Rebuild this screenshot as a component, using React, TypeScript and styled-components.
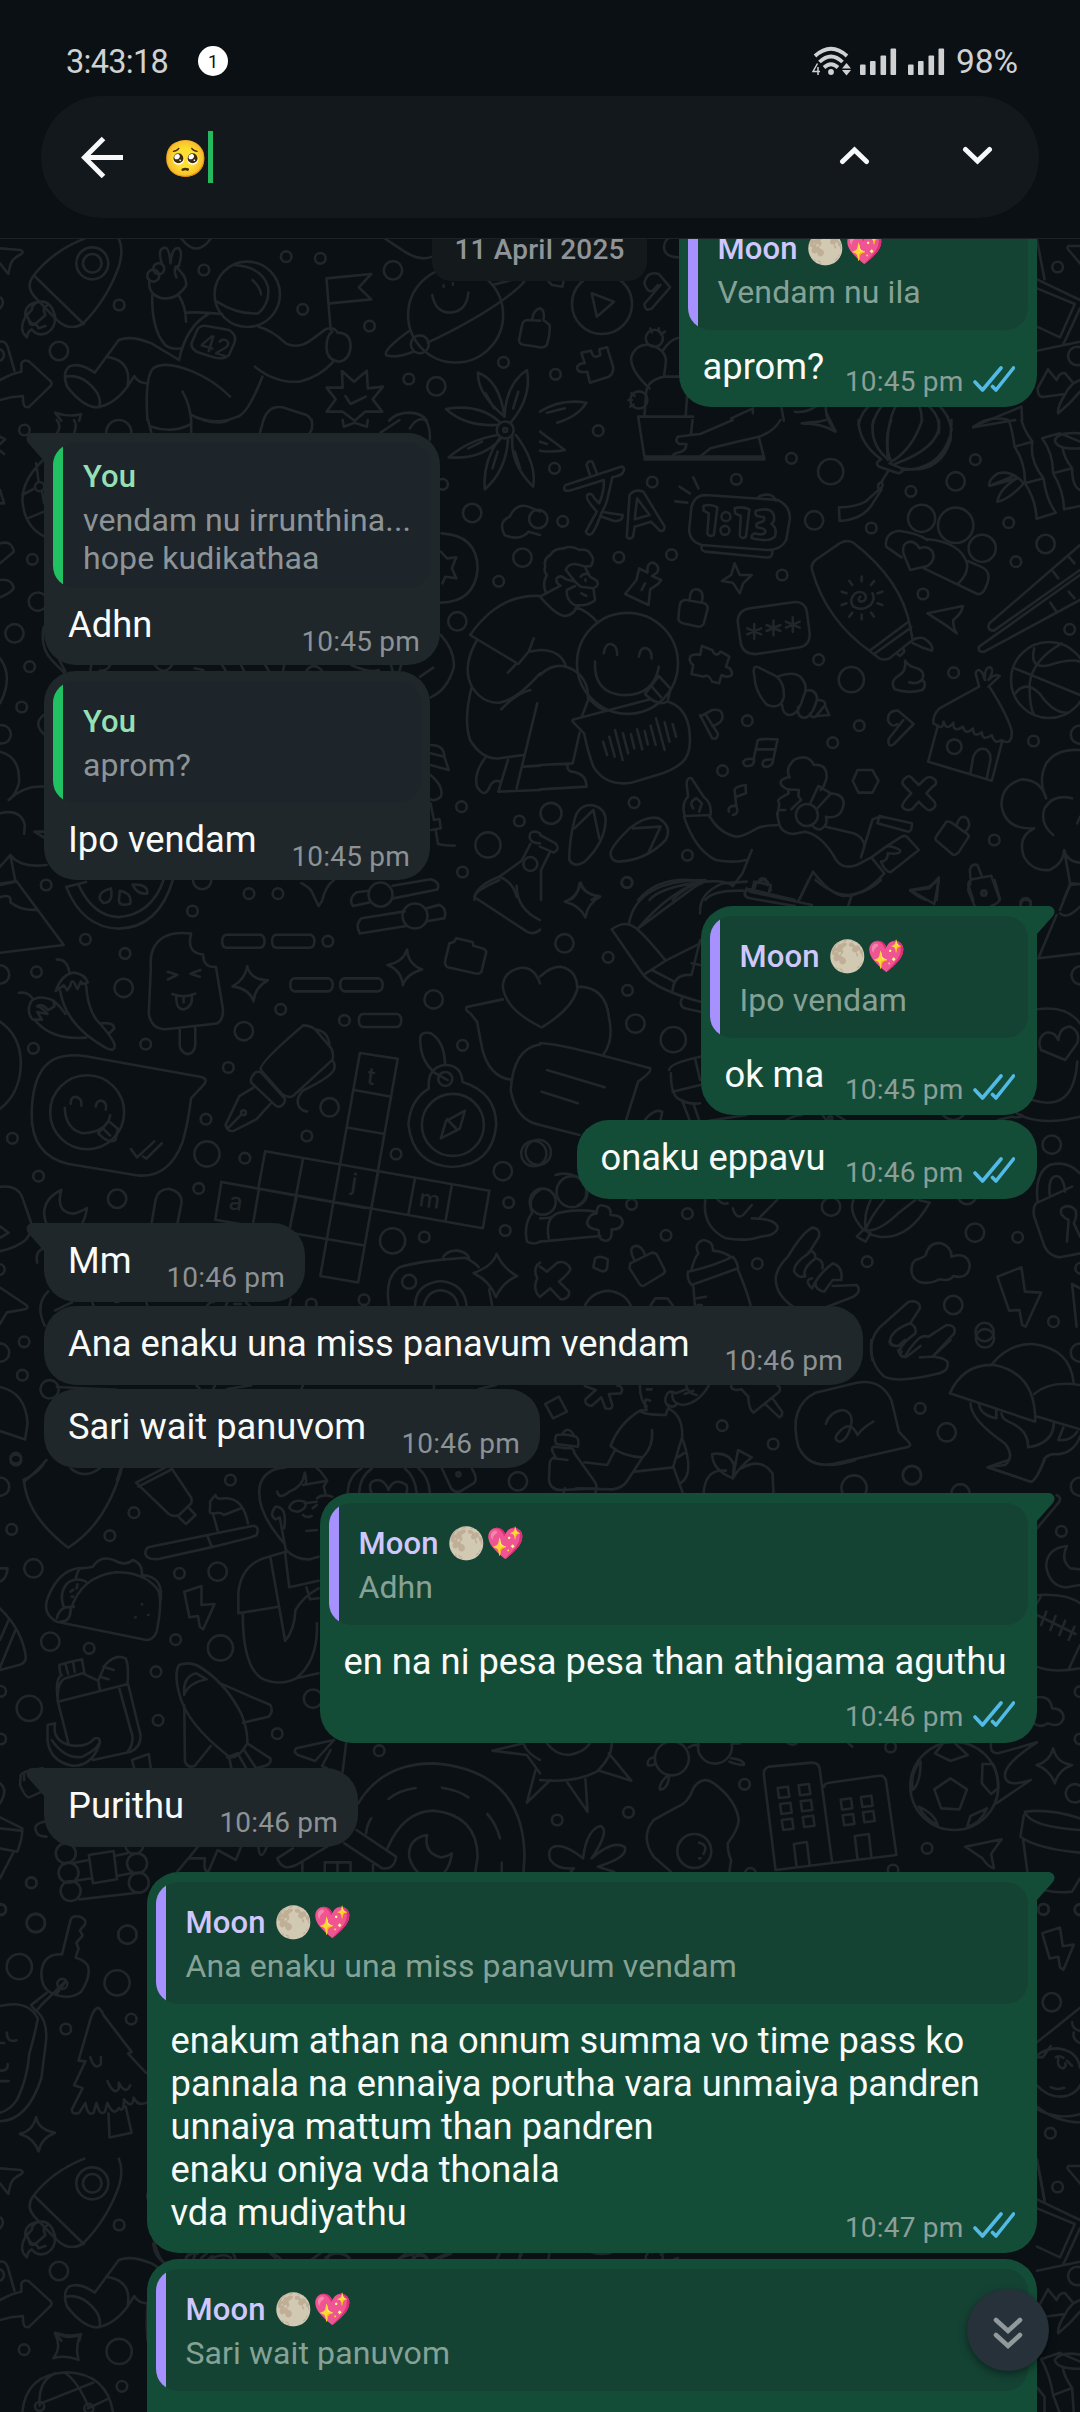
import React from "react";
import styled, { createGlobalStyle } from "styled-components";

const GlobalStyle = createGlobalStyle`
  * { box-sizing: border-box; }
  html, body { margin: 0; padding: 0; background: #0a1014; }
  body { font-family: Roboto, "Noto Sans", sans-serif; overflow: hidden; }
`;

/* ---------- wallpaper ---------- */

type Dot = [number, number, number];
interface Patch {
  x: number;
  y: number;
  sy: number;
  paths: string[];
  dots: Dot[];
  rounds?: Dot[];
}

const SX = 540 / 1568;
const S = 5.3;
const M = 9.2;
const L = 12.6;

const topLeft: Patch = {
  x: 0, y: 0, sy: 1 / 3,
  paths: [
    "M0 745L60 750Q70 754 62 762Q35 775 30 795L24 822L0 790",
    "M245 716Q150 755 95 830Q75 860 100 890L165 960Q200 995 240 972Q310 900 345 800Q360 750 345 716M100 828L243 972",
    "M100 908Q70 918 74 950Q58 980 68 1000L78 1012Q80 995 92 988Q110 1010 135 1000Q162 985 160 950Q150 905 120 905Q95 905 92 930L78 945Q90 985 110 965L132 945Q120 920 140 915M85 965Q88 980 105 972L112 985L132 978",
    "M0 925Q15 910 3 893M0 1025Q15 1022 22 1040L42 1112",
    "M0 1140Q35 1120 62 1115L62 1090Q70 1076 85 1085L148 1145Q152 1152 145 1160L85 1220Q70 1225 68 1210L66 1188Q30 1190 0 1200",
    "M470 790Q455 745 480 743Q492 745 495 790Q500 738 520 745Q532 760 518 800M510 800Q545 830 540 858Q510 905 465 893Q428 880 434 840M512 832Q500 800 520 797",
    "M442 885Q440 990 480 1035Q495 1050 528 1045M520 888Q540 920 540 965M540 938Q580 935 645 942M520 1080Q540 980 605 942",
    "M680 795Q760 800 778 860Q785 910 750 940Q690 945 630 905M733 840Q755 860 758 883",
    "M750 980Q790 990 830 1030Q870 1050 910 1015L945 988Q970 978 980 998Q1018 998 1018 1040Q1015 1080 985 1085Q950 1080 948 1045Q948 1005 965 995",
    "M960 990L948 835L1078 822L1042 862L1078 898L958 910",
    "M600 978L665 990Q690 1005 680 1030L665 1065Q650 1080 620 1072L570 1055Q550 1040 558 1025L575 985Q585 975 600 978",
    "M520 1080L440 1030Q380 1005 345 1020L275 1118Q230 1085 200 1100Q180 1120 195 1160Q240 1220 280 1222Q330 1215 370 1160Q385 1080 308 1070M190 1130Q240 1120 280 1175Q295 1200 288 1222M370 1160L390 1128Q400 1150 430 1150",
    "M428 1260Q420 1130 445 1105Q480 1080 560 1115Q620 1140 668 1190M530 1175Q550 1210 555 1260M740 1100Q800 1150 870 1145Q930 1130 968 1085M762 1130Q720 1240 690 1250Q620 1280 555 1245",
    "M1028 1145L1065 1112L1068 1165L1112 1160L1082 1198L1110 1235L1060 1235L1030 1262L995 1235L948 1235L975 1198L948 1163L995 1163L993 1113ZM1003 1188L1018 1212L1062 1190",
    "M1192 990Q1110 1050 1122 1066Q1150 1075 1200 1055M1242 1028Q1380 960 1460 900Q1520 855 1525 838M1430 855L1520 830M1255 885Q1265 938 1307 938Q1355 935 1360 878M1288 856v4M1315 850v4",
    "M527 716Q570 775 612 716M1118 716L1175 755Q1220 785 1255 770",
    "M1545 960Q1548 930 1568 925M1568 962L1530 960Q1518 962 1516 975L1507 1020Q1508 1035 1525 1035L1568 1042",
    "M1465 1250Q1385 1180 1388 1118Q1450 1140 1465 1250Q1470 1150 1530 1110Q1545 1190 1485 1265M1445 1275Q1350 1280 1295 1227Q1390 1210 1450 1265M1410 1180L1435 1225M1505 1175L1490 1225",
    "M765 1260Q780 1215 820 1222L890 1245Q900 1250 905 1262M178 1262L160 1238Q200 1252 235 1243L230 1262M1130 1262Q1150 1238 1190 1238Q1225 1240 1240 1262",
  ],
  dots: [[592,810,S],[831,770,S],[930,775,S],[879,928,S],[1073,978,S],[1187,1137,S],[1462,1087,S],[346,915,S],[171,1053,M],[1141,811,M],[1267,1159,M]],
  rounds: [[268,790,16],[268,790,9.3],[445,827,6],[461,806,5.5],[718,883,32.7],[1323,945,47.5],[1219,1033,9],[-6,1065,6]],
};

const topRight: Patch = {
  x: 540, y: 0, sy: 1 / 3,
  paths: [
    "M400 772Q360 770 360 740Q362 722 372 716M150 880L215 905L165 950Z",
    "M303 850Q310 812 345 822L378 862L325 925Q305 937 303 912L350 855M303 850Q312 880 328 872L342 855",
    "M0 925Q15 930 10 960L28 975Q30 1000 20 1035Q10 1045 0 1042M25 845L35 855L65 860L68 845",
    "M145 1148L137 1115Q105 1120 108 1100Q115 1088 130 1090L120 1058L148 1052Q155 1080 175 1065L172 1048L195 1042L212 1100Q215 1120 200 1130Z",
    "M318 1165Q260 1110 265 1070Q280 1030 320 1035Q370 1050 365 1090L360 1130Q310 1140 308 1180L303 1250M360 1130L415 1130M355 1055Q375 1020 400 1014M285 1250L445 1250M423 1250L427 1190M320 985l5 12M345 985v10M363 995l-12 8M265 1180l10 8M257 1200h10M262 1220l10 -6",
    "M0 1235Q60 1195 135 1208Q110 1250 50 1268M20 1238L72 1225M285 1250L303 1370L650 1370",
    "M1443 720L1465 838M1443 838L1568 900M1443 865L1553 912L1510 1012L1443 980M1568 925L1520 1032M1443 1052L1568 1025M1568 738L1535 738Q1528 742 1535 750L1568 790",
    "M1475 1108L1500 1140Q1510 1115 1525 1120L1545 1145M1475 1108L1445 1165Q1445 1195 1465 1190L1525 1182Q1500 1225 1505 1240Q1540 1210 1568 1175M1525 1182Q1540 1150 1568 1140",
    "M555 1255L618 1225L618 1240M700 1215L708 1262M800 1220Q770 1240 740 1235M830 1220Q828 1260 858 1292",
    "M925 1275Q940 1190 1060 1180Q1180 1190 1195 1290M965 1280Q980 1200 1060 1180Q1000 1240 1010 1380M1060 1180Q1110 1200 1108 1262M1060 1180Q1170 1220 1158 1300M1258 1280L1398 1220L1400 1260",
  ],
  dots: [[45,1123,S],[1503,801,S],[1560,1068,M]],
  rounds: [[180,912,30],[332,1015,8.6],[287,1200,8.6]],
};

const patches: Patch[] = [
  {
    x: 0, y: 420, sy: 1 / 3,
    paths: [
      "M0 50L15 58L0 72M0 92L12 102M165 0Q180 20 165 40M430 0L440 40M440 20Q500 42 555 12M555 0V40M765 0L755 38M590 0Q640 15 665 0M905 0Q910 25 900 38M995 0L998 20L1030 8L1065 20L1068 0M1105 38L1160 0M1190 25Q1210 -10 1235 0Q1250 20 1248 60M215 40Q225 15 215 0",
      "M1445 45Q1360 60 1303 112Q1400 120 1455 55M1450 55Q1400 130 1408 208Q1470 150 1475 58M1488 50Q1480 130 1548 200Q1560 130 1498 45M1360 85L1400 65M1430 145L1445 95M1510 145L1495 95",
      "M125 120Q65 180 65 240Q70 320 130 350M105 130L112 185M122 215L128 250M65 225L100 205M80 295L128 275M0 250L12 250L0 210M0 370Q35 360 40 395L0 430M0 480Q35 475 40 505Q30 520 0 532",
      "M1282 340Q1385 345 1387 445Q1380 545 1280 548M1285 490L1293 470L1325 475L1312 445L1325 412L1298 415L1280 395",
      "M1568 345L1535 335Q1510 365 1465 345Q1445 305 1480 290Q1500 245 1540 262L1568 275",
      "M1568 528Q1450 520 1365 645L1505 732L1535 695L1568 690M1385 660Q1340 740 1370 800Q1400 850 1450 848Q1500 840 1568 760M1475 758L1500 730M1370 800Q1345 900 1365 960Q1400 1020 1450 1015L1520 1005M1455 868Q1500 820 1540 810M1408 1015Q1375 1060 1385 1100Q1405 1135 1420 1105Q1430 1075 1455 1085M1475 1020L1447 1115L1568 1110M1560 850L1500 1105M1520 1040L1568 1037M1535 695L1550 655",
      "M1280 645Q1320 690 1318 740Q1300 810 1250 832M1220 770L1258 743M127 620Q115 680 150 720L188 760M172 720L190 755M265 735L262 752M320 735Q310 755 290 752M450 735Q475 770 500 735M565 745L590 750M645 735L655 752M700 735L708 752M770 735L780 752M825 735L822 752M890 752Q910 725 935 752M1020 735Q1070 760 1100 750M1135 735L1140 752M1165 735L1160 752",
      "M1250 975Q1290 975 1290 1010L1250 1000M1290 1010L1303 1050L1250 1035M1250 1065Q1290 1100 1280 1130Q1265 1145 1250 1138M1250 1150L1260 1200L1276 1197L1280 1225L1252 1230M1265 1230L1272 1272Q1290 1277 1320 1277M1540 1240Q1530 1268 1568 1270M1568 1240Q1550 1230 1540 1240M1540 1272L1515 1322L1450 1370Q1375 1400 1378 1440M1450 1370Q1490 1385 1500 1430",
      "M0 715Q40 770 0 850M0 995Q60 1010 55 1090Q45 1125 25 1140Q70 1095 130 1100M127 885Q95 910 127 942M0 1180Q60 1165 72 1215L70 1242M127 1235L100 1235L127 1252M0 1340L30 1305Q60 1345 135 1335M30 1305L45 1385L0 1395",
    ],
    dots: [[71,30,S],[1285,193,S],[94,418,S],[1448,484,S],[86,740,S],[63,861,S],[1340,1160,S],[1508,1203,S],[1343,1356,S],[134,1395,S],[723,1421,S],[807,1421,S],[1371,279,M],[1517,413,M],[1328,604,M],[110,545,M],[42,640,M],[5,943,M],[1417,1275,L]],
    rounds: [[1467,30,8.5],[1467,30,2],[345,38,12.6],[115,200,4.6],[1540,1332,7]],
  },
  {
    x: 540, y: 420, sy: 1 / 3,
    paths: [
      "M0 35L72 90Q40 98 0 92M0 65L20 72",
      "M443 0L438 45L400 50Q390 65 405 72L425 72Q425 90 410 95Q380 100 385 115M438 45L465 42L560 0M455 118L495 85L560 68L635 50Q680 35 698 0M635 50L652 118L303 118",
      "M760 10L810 5Q825 0 830 0M760 10Q820 10 858 35L832 -20",
      "M925 0Q925 60 975 105L990 118Q970 130 985 140L1040 160Q1060 155 1050 145L1015 130M1050 145Q1160 165 1192 60L1195 0M968 0Q955 70 1010 118M1020 0Q995 70 1020 125M1110 0Q1080 90 1020 125M1158 0Q1170 80 1030 132M1190 50Q1160 150 1050 150M1010 155L992 185Q1000 200 985 208Q975 195 992 185M985 208L945 245Q915 262 868 262L870 303Q930 300 960 260L992 208",
      "M1258 22L1380 0M1258 22Q1300 -15 1360 0Q1370 20 1378 80L1430 65Q1405 30 1398 0M1378 80Q1410 130 1408 190L1462 175Q1420 120 1430 65M1408 190Q1440 240 1442 296L1498 278Q1470 240 1462 175M1405 190Q1370 150 1330 160Q1300 180 1305 198L1385 175Q1335 205 1328 245Q1360 240 1405 190M1305 198L1370 170",
      "M1568 85Q1500 90 1495 60Q1505 35 1568 40M1458 55L1510 40L1568 65M1458 55Q1490 100 1490 160L1545 145Q1520 110 1518 85M1490 160Q1520 210 1522 268L1568 258M1545 145Q1545 200 1568 210",
      "M75 195L235 140Q248 140 242 155Q238 165 225 168L210 172L195 240Q190 260 180 275Q165 320 152 340Q140 350 133 335L165 275Q130 235 137 225Q150 215 158 235L172 250Q188 210 185 180L85 212Q65 215 72 198M145 165L135 135Q140 120 152 125L165 160M180 275L205 280L240 285Q240 305 215 303L180 290",
      "M252 350L260 225Q275 205 300 215L362 320Q362 335 348 332L322 305L275 320L270 350Q260 362 252 350M282 235L318 285L275 298Z",
      "M480 225L690 240Q730 260 725 300L715 360Q700 390 660 390L470 375Q435 365 433 330L440 260Q450 225 480 225M632 235Q640 220 670 225Q685 235 685 243M470 375Q465 392 480 395L655 412Q675 415 675 395M445 172L460 205M405 200L435 220M393 244L428 248",
      "M475 258Q495 250 515 262L505 345Q490 352 486 340L490 280L475 272ZM565 265Q585 258 608 268L598 350Q585 360 580 345L583 288L567 280ZM628 272Q680 258 680 295Q680 308 672 312Q690 325 682 350Q665 368 615 355Q612 345 622 340Q650 348 655 335Q655 325 630 322Q625 312 635 308Q655 305 650 292L630 288Q622 280 628 272",
      "M0 530L60 497Q45 490 48 475Q60 462 75 478L102 485L75 450Q85 420 130 440L148 438Q160 415 148 405Q140 385 115 390Q90 375 70 385Q40 385 30 405Q10 415 15 440Q10 455 20 465Q5 490 18 520M130 440L145 470L165 482Q175 495 155 505L118 500L102 485M155 505L160 540Q140 560 100 555Q75 540 78 510L102 498M120 520L135 528M0 530Q50 590 75 588Q100 582 105 562M105 562Q140 575 165 605M118 470Q125 460 138 462M132 478v4",
      "M247 522L280 480L288 445L312 458Q310 425 330 428Q350 440 340 458L325 468L352 480L345 490L320 508L315 555ZM305 490L295 510",
      "M412 545Q405 540 402 595Q400 605 415 610L460 620Q475 620 477 605L487 565Q487 550 470 548L425 540Q415 538 412 545M435 540Q435 505 455 508Q478 512 470 545",
      "M565 430L580 465L615 465L590 490L580 520L560 488L528 483L555 465Z",
      "M185 700Q190 670 205 672Q225 675 224 705M287 710Q290 682 308 684Q325 690 324 715M160 725Q155 815 235 825Q330 830 345 740M305 822L345 768L378 805M305 822Q340 860 370 845L380 805M325 800L352 832",
      "M0 690Q60 690 75 738M0 765Q30 735 65 738Q125 750 138 810L140 840L122 888M140 832Q160 860 188 872M115 938L95 1030L0 1035M82 1032Q75 1050 92 1055Q135 1060 135 1100L0 1108",
      "M100 898L320 838M372 845Q420 860 432 920Q445 1000 410 1030Q380 1055 340 1065L265 1088Q190 1100 155 1040Q140 1000 128 940L95 905Q92 898 100 898M183 965l12 40M201 950l16 60M218 930l22 90M241 940l15 60M264 943l10 42M282 928l15 60M304 933l9 40M321 917l15 58M337 895l25 95M362 907l14 58M385 912l10 38",
      "M470 678L500 690Q510 715 525 695L550 710L540 740Q560 745 557 765Q545 775 527 765L520 790L500 785Q490 760 475 770L440 762L445 735Q430 725 437 708Q450 700 465 705Z",
      "M610 565L740 546Q770 545 775 575L783 640Q785 675 755 682L630 702Q590 705 583 670L574 605Q575 570 610 565M622 612v44M602 625l40 18M642 625l-40 18M678 602v44M658 615l40 18M698 615l-40 18M734 592v44M714 605l40 18M754 605l-40 18",
      "M640 745Q615 730 622 765Q625 820 660 855Q700 870 708 830Q710 790 688 770ZM690 770Q740 750 760 775Q780 800 765 830Q750 885 725 885Q705 885 703 855M770 812Q800 805 805 835Q790 895 765 893Q745 890 750 860M805 840Q830 840 828 855L800 890Q785 895 785 880M828 858L840 885L805 888",
      "M800 420L870 370Q890 358 910 368Q1050 480 1075 620L1082 660L1015 715Q1000 722 985 715L960 695Q830 600 790 450Q785 435 800 420M960 690L1070 605M970 702L1078 622M1035 700L1045 708L1058 695L1055 685M1082 660Q1100 650 1115 655Q1145 675 1138 692Q1110 685 1080 668",
      "M930 530Q920 540 930 545Q950 545 945 525Q935 510 915 520Q895 540 910 560Q935 575 960 555Q975 535 965 520M934 470v14M970 483l-9 12M994 515l-14 5M994 555l-14-5M970 590l-9-12M934 598v-14M898 590l9-12M876 555l14-5M876 515l14 5M898 483l9 12",
      "M1005 380Q1000 340 1040 332Q1100 340 1125 360M1005 380L1050 412M1120 357Q1220 365 1240 430Q1245 460 1215 490M1115 445L1270 522Q1285 525 1295 500Q1315 455 1280 440L1242 423M1075 450L1055 400Q1050 365 1080 365Q1095 370 1102 385Q1125 375 1140 395Q1150 420 1125 438Z",
      "M1568 375L1305 610Q1295 630 1318 632L1568 450M1568 465L1275 680Q1270 698 1290 695L1568 540M1490 455L1505 475M1535 410L1552 430M1482 548L1498 572M1535 515L1552 535",
      "M1125 580L1228 558Q1225 580 1200 600Q1198 620 1210 640L1185 620Z",
      "M1378 745L1568 825M1435 685Q1420 750 1480 735Q1540 715 1568 725M1515 670Q1430 720 1422 790Q1420 860 1435 885M1380 820Q1410 780 1450 820Q1490 880 1530 878",
      "M1060 722Q1070 740 1095 745Q1120 755 1110 778Q1125 795 1110 810Q1070 822 1030 808Q1015 785 1040 768Q1065 755 1060 722M1110 778Q1095 795 1072 787",
      "M1275 800L1160 865Q1140 885 1142 910L1160 920Q1170 925 1172 905Q1180 935 1200 908Q1200 940 1228 920Q1235 948 1257 925Q1258 955 1283 937Q1285 965 1312 945Q1320 975 1340 960Q1370 980 1370 935Q1360 890 1305 800M1275 800L1265 760Q1272 740 1285 760L1292 780Q1290 740 1308 742Q1320 750 1302 780Q1320 760 1335 768L1302 800M1155 918L1127 1025L1312 1082L1342 965M1250 1060L1258 1010Q1270 980 1295 988Q1310 1000 1308 1020L1298 1072",
      "M465 885L500 955Q515 960 517 942L480 882M465 890L500 870Q530 865 530 890Q530 905 510 915L500 917",
      "M1010 900Q1010 870 1040 872L1085 912L1028 972Q1010 985 1012 958L1055 900M1010 900Q1020 925 1038 912",
      "M605 1038Q590 1040 590 1025Q600 1012 620 1018L632 962Q632 955 690 958L675 1030Q665 1045 648 1038Q640 1018 670 1018M605 1038Q622 1038 622 1018M630 988L682 988",
      "M548 1175Q545 1155 570 1158L565 1110Q565 1100 597 1095L598 1120L570 1130M570 1158Q580 1180 560 1185",
      "M922 1050L965 1050L983 1083L965 1118L925 1118L908 1083Z",
      "M1060 1075Q1072 1060 1085 1080L1100 1095L1115 1080Q1130 1062 1148 1080Q1155 1092 1140 1100L1122 1120L1145 1145Q1155 1160 1135 1170Q1125 1175 1100 1145L1080 1168Q1060 1175 1052 1160Q1050 1150 1078 1120L1055 1095Q1048 1085 1060 1075",
      "M420 1188L495 1185Q500 1150 475 1130L440 1075Q425 1070 426 1095L430 1130Q410 1150 420 1188M445 1165Q430 1145 455 1135L470 1150L462 1175M418 1190Q450 1290 510 1320Q560 1330 600 1320M490 1185Q520 1240 570 1250Q590 1250 630 1225Q650 1215 695 1215M615 1290L588 1360L560 1398",
      "M695 1215Q705 1240 735 1242L770 1235M695 1215L690 1190Q685 1170 700 1170L712 1170M690 1185L695 1150Q685 1140 705 1130L722 1120L720 1108L752 1110L750 1128L758 1140L742 1155L730 1168M722 1110Q690 1095 702 1080Q715 1070 725 1072Q710 1045 740 1018Q780 1000 795 1035Q835 1030 832 1075Q825 1100 815 1110M785 1150L808 1098L845 1120L805 1165M840 1120Q880 1120 882 1150Q875 1200 830 1190Q838 1215 815 1228Q800 1230 790 1215",
      "M770 1235Q820 1245 860 1320Q880 1350 920 1335L962 1312M830 1220L910 1240Q940 1250 942 1280L932 1312L965 1200Q975 1190 1000 1192M985 1188L1080 1210Q1080 1235 1070 1235L980 1210ZM1000 1360L962 1312L1005 1280L1050 1250Q1060 1245 1065 1250L1100 1290L1020 1355Q1005 1360 990 1325M1005 1280Q1020 1275 1045 1290Q1050 1305 1010 1300Q1010 1325 990 1325M752 1440L793 1355Q840 1420 880 1428Q940 1430 1000 1360",
      "M1180 1205L1150 1250Q1145 1260 1155 1265L1200 1305Q1208 1305 1215 1298L1245 1250Q1245 1242 1235 1238L1195 1208Q1185 1203 1180 1205M1210 1215Q1220 1180 1240 1195Q1255 1215 1235 1235",
      "M1568 990Q1500 985 1470 1030Q1445 1080 1470 1135Q1455 1080 1400 1078Q1340 1095 1340 1155Q1350 1230 1435 1225Q1385 1250 1405 1310Q1430 1355 1480 1350Q1520 1330 1522 1290Q1530 1325 1568 1328M1545 1135Q1490 1120 1465 1165Q1450 1210 1490 1245M1568 1190L1560 1210",
      "M85 1320Q85 1260 100 1200Q110 1155 150 1155Q195 1165 190 1210Q185 1270 130 1325Q100 1345 85 1320M100 1225L155 1170L172 1255M205 1305Q200 1285 260 1225Q310 1185 345 1195Q385 1220 365 1260Q310 1320 230 1325Q210 1325 205 1305M270 1225L350 1220L315 1298M350 1220",
      "M0 1245L45 1270Q60 1285 40 1298L0 1280M28 1298L3 1350V1440",
      "M285 1440Q350 1360 480 1385Q350 1400 318 1440M480 1385Q430 1390 385 1440M480 1385Q540 1380 560 1398M480 1440Q500 1410 590 1412M610 1408Q590 1410 598 1430M610 1408L740 1440M618 1405L622 1385L668 1395L670 1412M635 1385Q640 1370 655 1378Q662 1385 660 1395M85 1440Q110 1430 115 1390Q130 1425 172 1428L150 1440",
      "M1075 1412L1130 1405L1158 1372L1152 1440M1075 1412L1100 1430L1120 1440M1250 1375L1248 1350Q1252 1330 1270 1335L1282 1365M1245 1400Q1240 1385 1255 1378L1310 1367L1335 1440M1245 1400L1258 1440M1522 1290L1540 1395L1568 1392M1540 1395L1520 1440",
    ],
    dots: [[169,32,S],[42,145,S],[326,186,S],[570,178,S],[730,115,S],[66,304,S],[1264,119,S],[1077,214,S],[962,324,S],[1361,308,S],[1382,425,S],[229,412,S],[382,404,S],[703,465,S],[1112,522,S],[1538,628,S],[809,719,S],[1201,758,S],[602,902,S],[850,968,S],[927,917,S],[1433,963,S],[530,1052,S],[273,1148,S],[428,1306,S],[1319,1260,S],[253,1387,S],[-5,297,M],[1207,184,M],[1468,372,M],[796,301,M],[844,155,L],[904,779,L],[1568,944,M],[32,1180,10.5]],
    rounds: [[540,290,4.5],[537,331,4.5],[254,730,50.5],[1478,780,38],[1108,295,13.6],[1207,316,17.7],[1284,385,13.6],[775,1185,11],[1203,980,7.3],[1289,1419,2]],
  },
  {
    x: 0, y: 880, sy: 600 / 1568,
    paths: [
      "M0 45Q35 35 30 58Q60 80 105 78M0 10L48 3L185 170L0 190M192 18L250 5M192 18Q240 125 345 127Q460 125 502 0M228 12Q270 95 345 97Q440 90 475 0M290 50Q285 30 322 22Q330 60 300 60ZM348 28Q385 35 378 62Q350 70 345 55ZM385 12Q430 10 428 35Q400 40 385 12",
      "M875 8Q900 20 905 30L925 68L935 55Q945 15 970 0M1072 28L1035 32Q1010 50 1025 68L1075 58M1140 15L1250 -2Q1280 5 1270 25L1142 48M1175 82L1050 100Q1030 115 1045 140L1180 120M1235 75L1275 65Q1300 75 1290 100L1240 108M1378 45Q1375 30 1450 0M1378 45L1530 135Q1550 145 1568 130M1500 15Q1500 75 1568 105",
      "M555 140Q470 130 445 180Q435 200 438 230L432 350Q440 390 480 390L630 375Q650 365 647 335L627 227Q590 230 590 195Q540 190 555 140M522 388V435Q530 455 548 455Q565 450 567 430V385M487 240L515 248L487 260M582 235L553 245L580 253M500 298Q535 310 567 297M512 303Q510 340 535 338Q560 330 557 303M533 305V320",
      "M657 143H757Q769 148 768 160Q768 175 755 177H657Q645 175 645 160Q645 145 657 143M802 143H902Q914 148 913 160Q913 175 900 177H802Q790 175 790 160Q790 145 802 143M855 257H955Q967 262 966 274Q966 289 953 291H855Q843 289 843 274Q843 259 855 257M1000 257H1100Q1112 262 1111 274Q1111 289 1098 291H1000Q988 289 988 274Q988 259 1000 257M1054 350H1154Q1166 355 1165 367Q1165 382 1152 384H1054Q1042 382 1042 367Q1042 352 1054 350",
      "M718 225Q725 260 778 262Q740 280 736 317Q725 285 675 278Q712 260 718 225ZM1182 182Q1185 220 1226 234Q1180 245 1170 275Q1165 235 1125 222Q1170 215 1182 182Z",
      "M1305 165L1318 162L1325 152L1372 162L1375 172L1405 180Q1415 185 1410 195L1398 240Q1390 248 1375 243L1300 228Q1290 222 1293 210Z",
      "M165 208Q195 205 202 243M162 290Q180 245 215 242Q245 245 255 268L240 272L235 265L225 285L215 268Q205 260 205 275L195 288L185 275ZM175 290Q190 380 310 440Q335 450 333 430Q325 410 290 375Q255 345 250 275M290 375Q330 370 332 388L318 400M55 295Q80 290 97 312M95 365Q75 345 90 318Q110 298 155 315L158 330L140 340Q120 320 108 330Q125 335 138 350L108 345L122 365ZM100 365Q150 420 250 412M155 315Q175 330 190 350",
      "M245 460L585 515Q605 520 592 535L555 570Q545 640 530 685Q490 780 400 772L200 742Q90 720 92 610Q95 470 190 460Q215 456 245 460M205 585Q205 565 222 567Q240 572 236 590M278 592Q280 575 296 577Q312 582 307 600M188 595Q190 650 240 662Q310 660 320 615M285 662L315 630L342 650M285 662Q315 690 335 680L342 650M300 650L320 668M380 703L398 725L448 683M415 722L425 728L470 688",
      "M757 495Q750 480 880 380Q900 380 915 390L962 440Q970 455 965 470L850 565Q835 570 820 560L765 505ZM915 390Q955 395 957 435M965 470Q975 480 970 495Q960 515 880 550Q855 575 870 595Q880 605 892 605M735 510Q745 495 760 505L820 565Q835 575 820 588Q808 598 795 585L730 530Q725 520 735 510M735 543L695 565L655 640Q660 660 680 655L745 625L785 585M660 650L702 612",
      "M1045 452L1155 467L1040 1052L930 1035ZM1028 549L1133 566M1008 647L1113 663M770 709L1421 812L1402 910L750 806ZM643 789L1060 857M643 789L625 888L1058 955M880 728L842 908M752 806L735 898M1205 780L1186 872M1312 797L1294 889M862 824L842 908M1098 763L1078 860",
      "M1245 545Q1190 575 1186 640Q1200 745 1313 750Q1430 745 1441 640Q1440 555 1343 528Q1340 485 1293 483Q1240 490 1245 545M1292 480Q1290 420 1250 400Q1220 395 1220 415Q1220 470 1258 500M1255 500L1300 523M1350 603L1335 650L1280 675L1295 630ZM1298 625L1325 650",
      "M1568 270Q1550 225 1510 230Q1460 240 1460 280Q1470 340 1568 383M1460 312L1355 332Q1350 342 1365 348L1385 370L1400 440Q1420 515 1485 522M1568 430Q1490 440 1483 550Q1500 630 1568 640M0 370Q65 410 60 490Q55 560 0 598",
      "M178 810Q160 870 215 872Q240 865 252 857Q250 880 238 898M178 810Q130 830 128 870Q130 890 135 898M440 898L452 835Q460 808 490 807Q530 815 527 845L515 898M0 802Q50 795 65 830L90 895Q95 920 75 940Q50 960 0 970M0 905L25 922L0 935M108 1000Q100 970 130 962M0 1065L78 1112Q85 1120 65 1123L20 1130L0 1160M140 1075Q100 1110 130 1165M160 1125L210 1103M268 1103L272 1115M335 1103h8M425 1103l3 12M600 1115Q610 1100 620 1103M660 1103l-5 12M680 1108h20M715 1105l10 8M840 1115L845 1095",
      "M1130 1115Q1115 1040 1160 1012Q1200 1000 1285 992L1350 987Q1380 1000 1390 1012M1285 992Q1290 970 1325 968Q1355 972 1362 987M1375 1027Q1430 1010 1442 977Q1460 1015 1502 1035Q1460 1050 1440 1090Q1425 1050 1375 1027M1420 1070L1430 1115M1205 1115Q1205 1055 1280 1048Q1350 1055 1355 1115M1230 1115Q1240 1072 1282 1072Q1325 1078 1330 1115",
      "M0 1325Q75 1340 80 1420L73 1462L0 1440M130 1520Q120 1545 68 1568M350 1540L340 1568M165 1325L340 1332M570 1320L580 1330M625 1320L618 1332M660 1330L730 1320M880 1320l-5 10M1260 1320v10M1390 1330L1440 1320",
      "M1568 810Q1530 830 1545 870Q1520 900 1530 945Q1550 955 1568 945M1568 1000Q1545 1015 1560 1040Q1545 1070 1568 1090",
    ],
    dots: [[559,81,S],[248,155,S],[363,192,S],[106,240,S],[815,338,S],[952,160,S],[1000,367,S],[97,440,S],[423,429,S],[663,490,S],[1343,432,S],[598,625,S],[891,669,S],[36,675,S],[711,727,S],[1150,716,S],[112,774,S],[577,806,S],[1477,843,S],[1467,916,S],[1232,933,S],[904,1108,S],[1057,1097,S],[70,1207,S],[65,1294,S],[46,1511,S],[-2,1018,S],[587,0,M],[0,247,M],[359,282,M],[1259,312,M],[708,395,M],[957,594,M],[1460,761,M],[340,833,M],[0,1235,M],[144,1331,M],[1550,715,L],[601,716,L],[1140,943,L]],
    rounds: [[1105,38,12],[1205,94,12.5],[253,607,37],[707,608,2.4],[1293,520,7],[1315,640,31],[1188,1050,7]],
  },
  {
    x: 540, y: 880, sy: 1 / 3,
    paths: [
      "M118 8Q130 45 175 50Q138 70 132 112Q115 75 72 65Q110 50 118 8",
      "M208 148Q240 125 262 135Q285 140 365 242L300 285ZM258 132Q280 0 480 0Q380 30 285 145M285 145L430 35Q460 10 470 10M465 100Q460 40 530 10L600 5M300 285Q340 330 465 365M365 242L465 190M325 270L390 305M385 330Q390 280 440 285L465 180M465 255L440 250M415 350Q400 375 420 385L465 395",
      "M600 25L610 35L790 75M600 25Q585 50 610 55L740 78M622 25L630 5L670 15L665 35M640 5Q650 -8 662 8L660 15M752 60L780 0M800 0Q870 60 920 40Q960 30 990 0M905 45L895 78M1075 30L1130 20L1158 0L1145 72M1075 30L1145 72M1250 10Q1240 25 1245 35L1262 78M1320 0L1335 55Q1335 70 1310 78M1395 75Q1400 50 1425 65L1425 75M1510 90L1540 10L1568 12M1510 100Q1530 120 1568 80M1500 105L1447 235L1568 220",
      "M0 290Q30 260 60 260Q110 270 108 330Q90 390 5 442M110 320Q190 320 200 410Q215 480 185 522M0 490Q40 485 320 565Q325 575 285 605L250 720M20 570L188 622M5 635L110 670M0 735L115 765M375 570Q375 550 465 530M380 580Q380 640 400 655Q430 675 465 670M385 635L465 615M450 535L465 600M412 660L435 722M445 670L462 720M305 720Q330 685 355 695L350 720M490 722L600 705M715 720Q740 705 760 705M820 705L830 718M860 705L885 720M1170 705Q1200 735 1230 705M1330 720L1370 710Q1400 715 1400 705",
      "M1443 388Q1530 375 1568 430M1385 700Q1450 740 1568 710M1430 660Q1550 700 1560 545M1525 540L1455 510Q1440 475 1470 458Q1495 455 1505 480Q1510 440 1540 440Q1570 455 1560 490Z",
      "M45 885Q95 870 130 910Q145 960 110 975M0 1015Q30 1015 35 1010M0 1085L175 1068M25 1075Q15 1015 50 1000Q100 985 165 995M165 1000Q165 970 185 977Q208 980 205 1005Q240 1005 240 1028Q235 1050 208 1048Q210 1085 188 1082Q170 1080 170 1050Q135 1045 137 1025Q145 1000 165 1000",
      "M160 1135Q175 1125 197 1138L195 1165Q190 1178 175 1172L155 1162ZM262 1150L325 1118Q335 1118 340 1125L362 1170Q365 1180 352 1185L305 1215Q295 1222 288 1210L260 1165ZM275 1142Q255 1105 275 1098Q295 1095 305 1125",
      "M0 1160L20 1175L50 1148Q75 1140 88 1165Q90 1175 55 1205L85 1235Q85 1258 60 1258L30 1225L0 1250M130 1278Q150 1235 200 1232Q250 1240 265 1280M320 1278L335 1255H370L388 1280",
      "M480 960Q470 1040 540 1075Q600 1085 640 1070Q690 1065 690 1040Q680 1015 615 1015M640 1010L690 958M515 958Q530 975 545 970M560 985Q570 1020 590 1005L615 975",
      "M430 1175Q500 1160 560 1130Q575 1150 575 1165L440 1215Q425 1195 430 1175M440 1168Q450 1130 460 1120Q445 1090 475 1080Q505 1085 502 1112Q535 1115 555 1132M445 1218L450 1278M575 1170Q600 1230 612 1278M455 1255L482 1250M458 1275h12",
      "M735 1280Q680 1240 685 1190Q690 1160 720 1130Q760 1060 790 1043Q815 1045 810 1070L780 1120M780 1120Q735 1150 738 1175Q755 1200 770 1185M770 1190Q760 1165 800 1135Q825 1140 820 1165M790 1195Q765 1200 790 1225Q810 1180 850 1150Q880 1160 875 1200L850 1200L825 1235Q800 1230 800 1210M780 1115Q800 1110 800 1135M850 1218L920 1215Q935 1235 910 1250L830 1282",
      "M910 960Q895 1000 940 1050Q980 1060 1040 1000L1090 960M960 960Q940 1000 945 1050M1000 960Q960 1010 945 1050M1130 970Q1070 1080 985 1070L955 1062M940 1048L960 1060L945 1085L920 1070ZM1100 960L1132 968",
      "M1090 1140Q1120 1130 1120 1125Q1130 1085 1165 1090Q1195 1100 1195 1130Q1240 1115 1248 1155Q1245 1200 1200 1188Q1190 1205 1160 1198Q1130 1215 1100 1205Q1070 1190 1082 1150Z",
      "M1328 1190L1398 1162L1408 1235L1455 1238L1410 1340L1400 1335L1392 1290L1362 1292ZM1545 1212L1568 1225M1545 1212L1558 1340",
      "M1545 920L1440 970Q1430 985 1435 1010L1465 1100Q1480 1130 1510 1132L1568 1120M1445 965Q1435 880 1480 855Q1530 840 1568 880M1480 945Q1475 890 1500 888Q1520 890 1525 935M1530 1085L1535 1020Q1505 1005 1515 985Q1535 970 1555 990Q1560 1010 1550 1030L1568 1070",
      "M965 1440Q950 1370 1000 1330L1070 1265Q1105 1260 1103 1285L1075 1330M1075 1330Q1020 1350 1015 1385Q1030 1405 1045 1395M1050 1415Q1040 1430 1060 1430Q1075 1400 1100 1375Q1115 1365 1128 1370L1180 1335Q1210 1335 1203 1360L1140 1430M1075 1330Q1095 1340 1090 1360Q1050 1390 1045 1410",
    ],
    dots: [[252,8,S],[198,232,S],[254,331,S],[266,973,S],[428,1001,S],[366,1066,S],[631,1151,S],[950,1145,S],[1387,1072,S],[1491,1325,S],[1410,70,S],[71,190,M],[277,431,M],[1200,1275,M],[1263,1058,M],[845,980,M],[1486,794,M],[1291,1356,M],[1570,286,M],[-5,817,L],[387,479,L],[1240,945,M],[1570,1165,S]],
    rounds: [[1289,39,2.6],[8,965,13],[93,935,15.5],[843,715,2]],
  },
  {
    x: 540, y: 1340, sy: 1 / 3,
    paths: [
      "M15 192L55 170L78 215L38 235ZM130 138L162 150L132 178Q128 195 150 198L178 172L190 205Q210 212 210 195L200 162L235 160Q245 140 225 137",
      "M290 137Q290 180 310 200M310 148h14M320 182L308 178Q300 195 310 210L290 212Q300 225 365 225L372 205M375 200Q355 185 370 160Q380 150 395 160L425 148M372 195Q385 205 395 195M385 160Q380 190 415 195Q460 190 490 137M425 137Q430 160 455 165M445 152L420 162M290 212Q230 250 205 318Q240 350 298 352Q330 320 325 270M372 205Q415 225 413 290L387 380L415 460M218 330L195 375L128 367M298 352L255 420Q240 445 210 448L105 445M275 395L387 382M413 295Q450 400 410 428M400 352L425 335",
      "M40 355L80 360M45 350Q25 320 45 320L75 325Q100 320 100 340L145 405Q180 450 150 446L60 450Q30 450 26 420L28 370Q30 355 45 350M48 285Q70 280 105 290Q115 300 110 320L48 312Q40 300 48 285M65 282Q80 255 98 285M72 445L68 460M165 445L160 460",
      "M555 137Q555 155 585 148L605 170Q605 205 620 218L695 155Q700 140 690 137M652 190L695 232Q705 228 703 215L675 175",
      "M500 342Q550 335 563 375L560 415Q500 390 500 342M560 415L575 330L615 352Q580 380 560 415M540 392Q480 385 475 460M585 385Q640 350 675 400L678 458",
      "M800 158L920 128Q990 115 1020 180Q1030 220 1042 275L1072 308Q1080 318 1065 322L850 372Q780 385 750 320Q720 200 800 158M830 252Q840 215 880 210Q905 215 905 245Q895 300 870 305Q850 300 865 280Q900 235 922 285Q940 260 968 245",
      "M962 0Q955 70 1000 110Q1040 130 1150 102Q1190 95 1183 65Q1165 45 1103 52M1140 50L1192 0M1018 0Q1010 20 1040 18L1060 0M1040 30Q1045 55 1065 50L1105 18",
      "M1190 160Q1230 70 1320 75Q1440 100 1438 245ZM1310 75Q1360 10 1430 12Q1540 25 1550 130M1435 162Q1480 120 1568 135M1438 228L1568 268M1250 190Q1250 240 1350 310Q1380 350 1350 375L1300 382L1425 425Q1440 425 1465 355Q1480 340 1500 343Q1550 340 1568 290M1275 195Q1280 225 1325 235M1325 210V235M1340 220Q1340 235 1360 245Q1420 270 1417 322Q1490 310 1492 250M1520 262L1505 300Q1540 305 1560 275",
    ],
    dots: [[1104,205,S],[529,257,S],[677,312,S],[1181,277,M],[1080,406,M],[1221,460,M],[912,444,L],[1568,38,M],[1568,440,M],[1292,-5,M]],
  },
  {
    x: 0, y: 1460, sy: 1 / 3,
    paths: [
      "M70 65Q110 30 135 0M70 65Q80 170 198 263Q310 190 355 20M205 25Q245 60 290 25M395 68L485 20M395 68L490 162Q505 172 520 165L555 130Q560 115 550 105L498 25M402 80L495 30M520 172L540 192L568 165L550 145",
      "M610 145L610 125L625 105Q630 120 650 115Q705 110 720 190M610 145Q605 165 625 160Q640 155 650 165L700 145M618 160L632 212M430 262L735 197Q755 200 745 225Q735 235 460 297Q425 300 422 280Q422 268 430 262M603 230L615 260",
      "M825 250Q740 150 755 75Q770 25 830 22M805 95Q810 120 840 95Q880 80 885 38Q895 75 880 75L950 62Q930 30 920 25M950 62L940 80L945 100M825 205Q835 140 800 140Q780 165 800 178L812 172L830 270Q860 300 900 298L925 290M840 142Q850 115 885 125Q895 145 865 155Q845 155 840 142M885 130L920 125M920 115Q935 100 965 110M908 145L920 135M880 165Q890 175 905 168M890 213L920 210M830 275L780 290Q700 310 692 400V460L808 440M785 292L828 543Q855 510 858 450Q880 410 925 385M828 280L840 382L925 362M890 382L900 418L925 415M705 462Q705 620 760 655Q810 680 860 655Q925 600 920 490M860 655L925 640",
      "M1010 100Q1010 50 1050 25M1043 98Q1045 50 1080 25M1210 98Q1205 50 1175 25M1248 98Q1245 50 1215 25M1078 98Q1065 60 1100 60Q1120 65 1128 90Q1145 50 1180 75Q1185 90 1180 98M1283 25L1310 85Q1320 98 1335 95L1375 70Q1390 60 1370 25",
      "M165 485L425 540Q445 540 455 515Q475 410 455 385Q415 335 335 337Q235 350 205 450Q205 485 175 485M165 485Q120 460 140 410Q170 335 225 325Q250 325 270 320Q290 285 330 300Q365 320 385 300Q415 310 412 345M220 355Q225 330 235 325M412 345Q480 350 465 430M185 440Q170 400 195 370Q220 350 250 365M165 475Q170 450 190 442L215 440M205 395l8-6M222 385l3-12M208 410h4M412 433h1M393 472h1M430 465h1",
      "M535 395L585 378V435L623 432L590 508L580 500L575 468L550 472ZM0 445Q65 510 75 590Q75 610 55 615L0 630M45 510L0 622M25 480L0 540M0 325L22 325Q20 355 0 365",
      "M175 640L172 615L205 605L238 598L245 640M180 645Q165 650 165 690L168 725L372 672L408 825Q410 860 380 875L270 900M190 655L240 640Q270 655 285 662L290 690M190 655Q165 665 168 725L200 855M345 680L385 830Q385 860 370 875M285 662L305 615Q335 580 365 595Q375 620 370 672M300 620L330 630M290 650L315 658M190 612l8 30M212 606l5 30M138 795L160 790Q150 840 200 855Q250 865 275 835Q295 830 288 855Q265 920 210 917Q145 905 138 840ZM150 840Q190 900 240 890Q280 870 288 850M383 900L432 882L438 925M383 900L390 925",
      "M520 700Q505 640 520 615Q545 605 570 615Q650 660 700 760Q720 810 718 850Q690 900 665 890Q540 790 520 700M535 705Q530 650 570 640L600 658Q545 670 535 705M535 735L537 905Q545 925 565 918L612 858M635 668L785 735Q795 755 780 770L705 788M718 850L785 895Q790 915 760 920L740 925M665 890L672 925M690 880L715 925M710 872L742 922M660 892L690 880",
      "M970 840L860 865Q850 875 865 885L915 903L970 840M960 870L935 918M1005 850L995 935M935 918L950 925",
      "M60 950Q55 940 90 930L125 925M60 950L58 975Q75 1015 85 1012L128 992M70 940V960M0 970Q25 990 0 1030M130 1085Q95 1090 105 1115Q110 1130 135 1130M0 1072L65 1105Q65 1140 50 1175L0 1165M0 1105L60 1112M40 1175L0 1255",
      "M258 1185L330 1173L340 1258L270 1270ZM210 1210L258 1200M220 1262L265 1255M230 1318L400 1298M332 1188L370 1180M340 1248L380 1240M515 1235L575 1160M550 1195L595 1195Q590 1235 605 1235L632 1170L685 1200L700 1160M750 1160Q755 1210 775 1160M805 1195Q820 1235 860 1215L950 1160M805 1195L850 1165M1000 1150L1110 1225Q1145 1230 1150 1190L1035 1110M878 1205V1240M1083 1215V1240M943 1235V1207H1018V1235M980 1207V1235",
      "M1040 1030Q1110 910 1258 910Q1520 930 1523 1190L1520 1238M1125 1165Q1170 1055 1258 1052Q1385 1065 1387 1190L1380 1238M1128 1017Q1160 990 1207 984M1283 983Q1330 990 1360 1012M1415 1062Q1440 1090 1452 1135M1063 1120Q1065 1095 1078 1075M1457 1208V1238M1240 1125Q1230 1180 1280 1192Q1300 1190 1312 1180Q1308 1215 1290 1238M1240 1125Q1185 1135 1188 1190Q1195 1220 1215 1238M1430 872L1520 850M1430 872L1530 885L1568 940M1555 930L1530 1028L1568 990M1520 850Q1530 880 1568 900",
    ],
    dots: [[46,0,S],[669,60,S],[389,158,S],[34,208,S],[319,227,S],[521,340,S],[510,539,S],[259,565,S],[453,635,S],[459,781,S],[2,694,S],[2,837,S],[805,821,S],[1101,872,S],[91,1268,S],[2,1350,S],[0,80,M],[1504,64,M],[97,325,M],[632,335,M],[146,545,M],[909,716,M],[104,1388,M],[370,1424,M],[640,564,L],[85,745,L]],
    rounds: [[1331,43,2],[191,1180,10],[199,1238,10],[205,1293,10],[398,1210,10],[403,1268,10],[390,1155,9]],
  },
  {
    x: 540, y: 1460, sy: 1 / 3,
    paths: [
      "M780 0Q830 30 915 0M1300 22L1360 0M1300 22L1425 65Q1440 65 1465 0M1500 105Q1520 115 1500 135L1443 205M1530 258Q1470 265 1470 320Q1480 380 1530 382L1568 375M1530 258Q1510 300 1540 325L1568 328M1443 405Q1530 400 1568 430M1443 620Q1490 640 1568 625M1443 465L1555 522M1470 455L1455 495M1497 468L1482 510M1525 482L1508 525M1552 500L1535 540M1568 555L1535 628M1455 408L1443 430M1443 712Q1480 705 1487 745Q1520 745 1520 775Q1510 805 1475 790Q1450 805 1435 790",
      "M20 850Q45 885 82 885Q125 880 145 850M0 960Q100 970 165 935Q210 890 208 850M200 880L265 962L172 932M132 958L138 1055L80 968M30 960L0 990M432 862Q450 850 460 858M332 892Q310 895 313 915Q325 920 335 910M372 945Q345 970 348 988Q370 990 375 950M555 895Q595 900 592 915Q570 915 550 905M560 850h20M720 850Q735 858 745 850M895 850l12 10",
      "M380 1235L330 1190Q290 1130 330 1080L400 1040Q430 1030 445 985Q470 945 505 970Q570 1020 577 1080Q575 1110 545 1150Q545 1180 555 1200L550 1235M462 1148Q490 1155 475 1182M462 1195h4",
      "M684 1230L650 945Q648 925 665 920L790 908Q808 908 812 925L848 1205M684 1230L1035 1185L1005 965Q1002 945 985 947L840 968Q825 970 825 980M690 984l30-4l4 30l-30 4zM751 976l30-4l4 30l-30 4zM697 1032l30-4l4 30l-30 4zM757 1024l30-4l4 30l-30 4zM702 1080l30-4l4 30l-30 4zM763 1071l30-4l4 30l-30 4zM873 1019l30-4l4 30l-30 4zM932 1011l30-4l4 30l-30 4zM879 1066l30-4l4 30l-30 4zM938 1057l30-4l4 30l-30 4zM745 1220L737 1152L775 1146L783 1216M922 1198L914 1128L955 1122L962 1190",
      "M1145 988L1192 955L1240 988L1218 1048L1165 1045ZM1205 850L1242 885L1192 903L1147 880L1170 850M1105 905Q1075 935 1082 990Q1105 970 1105 905M1285 912L1315 912Q1330 940 1330 985L1310 1002L1283 970ZM1100 1040Q1145 1060 1155 1095Q1120 1080 1100 1040M1298 1045L1250 1068L1240 1102Q1280 1090 1298 1045",
      "M1310 850Q1305 880 1330 880Q1400 860 1443 847Q1350 910 1350 945Q1350 985 1425 960L1325 1030M1490 865Q1500 910 1545 915Q1505 930 1495 970Q1480 930 1442 915Q1480 905 1490 865",
      "M1408 1055Q1480 1045 1568 1075M1408 1055Q1420 1100 1568 1110M1405 1065L1395 1130Q1440 1165 1568 1178M1403 1140L1415 1235M1568 1255L1545 1295Q1500 1300 1463 1290",
      "M1235 1160L1340 1138L1310 1182L1318 1225Q1300 1220 1285 1195ZM30 1200Q20 1170 40 1160Q70 1150 125 1195Q135 1110 175 1098Q205 1110 150 1195Q210 1140 245 1160Q260 1190 168 1220L215 1235M30 1200Q50 1230 98 1225L90 1235",
    ],
    dots: [[1514,214,S],[1018,861,S],[594,973,S],[50,1080,S],[257,1057,S],[1124,1165,S],[1025,1230,S],[1462,1348,S],[1568,695,S],[1568,837,S],[611,1240,S],[1568,1350,S],[1553,1000,M],[1080,45,M]],
    rounds: [[383,895,17],[508,860,17],[448,1173,17],[1203,978,44]],
  },
  {
    x: 0, y: 1860, sy: 552 / 1568,
    paths: [
      "M180 268L205 170Q210 155 235 162Q255 172 245 185L232 200L240 215L222 235L228 252L220 275M180 268Q125 265 120 320Q120 365 150 378Q200 400 235 375Q265 330 255 300Q245 285 220 278M135 378L90 412L105 430L120 412L190 345M190 345L165 380M90 412L110 398",
      "M0 415Q80 395 110 450Q100 500 85 550Q80 620 50 680Q30 710 0 718M110 432Q140 460 133 520L120 620Q80 740 0 742M20 490Q20 520 48 512M0 520H12M0 598Q25 600 22 580M0 628H25",
      "M285 420Q275 420 265 445L228 570L248 572L215 640L240 648L208 710Q210 725 230 718L248 690Q255 730 272 718L280 690Q290 730 305 715L312 690Q330 730 345 705Q360 720 360 680Q385 710 388 675Q400 700 424 690M285 420Q295 425 300 440L382 545L372 550L424 605M315 720L318 788L382 775L365 700M262 560Q275 600 293 580V560M312 628Q330 670 345 650Q345 635 345 632Q365 670 378 640",
      "M105 730Q110 765 160 775Q120 790 112 828Q100 790 58 778Q95 770 105 730M445 1090Q450 1130 480 1145M540 1130Q550 1115 575 1118M585 1130L600 1118M620 1130Q650 1115 670 1130M785 1118L800 1130M945 1130Q980 1105 1015 1130M1165 1130L1200 1118M1190 1118Q1230 1115 1240 1130M1280 1130L1310 1118M1450 1118l-5 12M1515 1118l-5 12",
      "M178 1350Q195 1360 232 1350Q218 1385 228 1420Q190 1405 155 1415Q180 1385 160 1345L178 1350M65 1568Q75 1460 195 1455Q310 1460 328 1568M115 1550Q110 1480 160 1458M115 1545L270 1485M190 1458Q225 1480 258 1555M255 1558L315 1530",
    ],
    dots: [[91,65,S],[191,480,S],[381,452,S],[2,140,S],[70,1391,S],[354,1495,S],[104,180,M],[370,212,M],[56,303,L],[340,349,L],[346,1396,L]],
    rounds: [[181,352,5],[115,1552,4.6],[258,1558,4.6]],
  },
  {
    x: 540, y: 1860, sy: 552 / 1568,
    paths: [
      "M1458 208L1510 192L1518 245L1550 240L1520 312L1510 305L1505 275L1480 280ZM1443 518L1568 420M1443 555Q1470 535 1500 535Q1560 540 1568 590M1443 560L1460 560L1483 528M1443 640Q1480 680 1530 670Q1560 660 1568 640M1505 565Q1500 590 1520 592Q1530 585 1525 578M1483 645Q1500 655 1522 647M1498 560Q1510 555 1520 562M1530 570L1545 585M1545 460Q1545 480 1568 485M1550 490Q1545 510 1568 520M1443 700Q1500 745 1568 745M1443 708Q1500 740 1568 722M1443 850L1465 970",
      "M1455 1418L1510 1400L1568 1425M1455 1418Q1480 1460 1490 1520L1545 1500Q1520 1465 1518 1440M1490 1520L1508 1568M1545 1500L1550 1568M1568 1445Q1500 1445 1495 1420Q1510 1395 1568 1405M1443 1498L1465 1525V1568",
    ],
    dots: [[1462,140,S],[1482,776,S],[1568,140,S],[1486,404,M]],
  },
];

const Wall = styled.svg`
  position: absolute;
  inset: 0;
  width: 1080px;
  height: 2173px;
  fill: none;
  stroke: #21262a;
  stroke-width: 2.6px;
  stroke-linecap: round;
  stroke-linejoin: round;

  path { vector-effect: non-scaling-stroke; }
`;

const DoodleText = styled.text`
  font: 500 24px Inter, sans-serif;
  fill: #21262a;
  stroke: none;
`;

function PatchDrawing({ p }: { p: Patch }) {
  return (
    <g>
      <g transform={`translate(${p.x} ${p.y}) scale(${SX} ${p.sy})`}>
        {p.paths.map((d, i) => <path key={i} d={d} />)}
      </g>
      {[...p.dots, ...(p.rounds ?? [])].map(([x, y, r], i) => (
        <circle key={i} cx={p.x + x * SX} cy={p.y + y * p.sy} r={r} />
      ))}
    </g>
  );
}

function Wallpaper() {
  return (
    <Wall viewBox="0 239 1080 2173" aria-hidden="true">
      {[0, 1920].map((dy) => (
        <g key={dy} transform={`translate(0 ${dy})`}>
          <PatchDrawing p={topLeft} />
          <PatchDrawing p={topRight} />
          <DoodleText transform="translate(198 349) rotate(17)">42</DoodleText>
        </g>
      ))}
      {patches.map((p, i) => <PatchDrawing key={i} p={p} />)}
      <DoodleText transform="translate(366 1084) rotate(8)">t</DoodleText>
      <DoodleText transform="translate(228 1209) rotate(8)">a</DoodleText>
      <DoodleText transform="translate(350 1190) rotate(8)">j</DoodleText>
      <DoodleText transform="translate(418 1206) rotate(8)">m</DoodleText>
    </Wall>
  );
}

/* ---------- header ---------- */

const Screen = styled.div`
  position: relative;
  display: flex;
  flex-direction: column;
  width: 1080px;
  height: 2412px;
  overflow: hidden;
  background: #0a1014;
`;

const StatusBar = styled.div`
  display: flex;
  align-items: center;
  height: 96px;
  padding: 28px 62px 0 66px;
  color: #cfd1d2;
`;

const StatusText = styled.span<{ $size: number; $spacing: number }>`
  font-size: ${(p) => p.$size}px;
  line-height: 40px;
  letter-spacing: ${(p) => p.$spacing}px;
`;

const Badge = styled.span`
  display: flex;
  align-items: center;
  justify-content: center;
  width: 30px;
  height: 30px;
  margin: -2px auto 0 30px;
  border-radius: 50%;
  background: #fff;
  color: #111;
  font-size: 18px;
`;

const StatusIcons = styled.svg`
  width: 133px;
  height: 30px;
  margin: -2px 11px 0 0;
  fill: #cfd1d2;
`;

const SearchBar = styled.div`
  display: flex;
  align-items: center;
  flex: none;
  height: 122px;
  margin: 0 41px;
  padding: 0 46px 0 40px;
  border-radius: 61px;
  background: #12181b;
`;

const BarIcon = styled.svg<{ $w: number; $h: number; $color?: string }>`
  width: ${(p) => p.$w}px;
  height: ${(p) => p.$h}px;
  fill: none;
  stroke: ${(p) => p.$color ?? "#f7f8fa"};
`;

const Query = styled.div`
  display: flex;
  align-items: center;
  flex: 1;
  margin-left: 40px;
  font-size: 36px;
  line-height: 50px;
`;

const QueryText = styled.span`
  width: 44px;
  padding-top: 3px;
  white-space: nowrap;
`;

const Caret = styled.i`
  width: 5px;
  height: 52px;
  margin: -1px 0 0 1px;
  background: #25b85e;
`;

const BarActions = styled.div`
  display: flex;
  gap: 92px;
  margin-top: -3px;
`;

const Rule = styled.div`
  flex: none;
  height: 1px;
  margin-top: 20px;
  background: #1c2225;
`;

/* ---------- chat ---------- */

const Chat = styled.main`
  position: relative;
  flex: 1;
  min-height: 0;
  overflow: hidden;
`;

const Thread = styled.div`
  position: relative;
  display: flex;
  flex-direction: column;
  margin-top: -41px;
  padding: 0 43.500px 0 44px;
`;

const DateChip = styled.div`
  position: absolute;
  top: -32px;
  left: 432px;
  display: flex;
  align-items: center;
  justify-content: center;
  width: 215px;
  height: 74px;
  padding-top: 11px;
  border-radius: 19px;
  background: #14191c;
  color: #8f9498;
  font-size: 28px;
  font-weight: 500;
  letter-spacing: 0.2px;
  white-space: nowrap;
`;

const Bubble = styled.article<{ $out?: boolean; $w: number; $gap: number; $tail?: boolean }>`
  position: relative;
  flex: none;
  align-self: ${(p) => (p.$out ? "flex-end" : "flex-start")};
  width: ${(p) => p.$w}px;
  margin-top: ${(p) => p.$gap}px;
  border-radius: 32px;
  border-top-right-radius: ${(p) => (p.$out && p.$tail ? 0 : 32)}px;
  border-top-left-radius: ${(p) => (!p.$out && p.$tail ? 0 : 32)}px;
  background: ${(p) => (p.$out ? "#144d37" : "#1f272a")};
`;

const TailShape = styled.svg<{ $out?: boolean }>`
  position: absolute;
  top: 0;
  ${(p) => (p.$out ? "right: -18px;" : "left: -18px; transform: scaleX(-1);")}
  width: 20px;
  height: 29px;
  fill: ${(p) => (p.$out ? "#144d37" : "#1f272a")};
`;

const Quote = styled.div<{ $out?: boolean; $tall?: boolean }>`
  position: relative;
  top: 10px;
  height: ${(p) => (p.$tall ? 145 : 122)}px;
  margin: 0 9px 10px;
  padding: ${(p) => (p.$tall ? 14 : 21)}px 20px 0 30px;
  overflow: hidden;
  border-radius: 22px;
  background:
    linear-gradient(${(p) => (p.$out ? "#a791ff, #a791ff" : "#21c063, #21c063")}) left / 10px 100% no-repeat,
    ${(p) => (p.$out ? "#144334" : "#1d242a")};
`;

const QuoteName = styled.div<{ $out?: boolean }>`
  height: 41px;
  color: ${(p) => (p.$out ? "#d1c7ff" : "#94dfb4")};
  font-size: 31px;
  font-weight: 500;
  line-height: 40px;
  letter-spacing: 0.15px;
  white-space: nowrap;
`;

const MoonGlyph = styled.span`
  filter: saturate(0.42) brightness(0.86) contrast(1.05);
`;

const QuoteText = styled.div<{ $out?: boolean }>`
  margin-top: 3px;
  color: ${(p) => (p.$out ? "#86a297" : "#8d9497")};
  font-size: 32px;
  line-height: 38px;
  letter-spacing: 0.1px;
  white-space: pre;
`;

const Body = styled.div<{ $out?: boolean; $quoted?: boolean; $stacked?: boolean }>`
  display: grid;
  row-gap: ${(p) => (p.$stacked ? 17 : 0)}px;
  padding: ${(p) => (p.$quoted ? 15 : 16)}px ${(p) => (p.$out ? 22 : 20)}px
    ${(p) => (p.$stacked ? 10 : p.$quoted ? 19 : 20)}px 24px;
`;

const MessageText = styled.p`
  grid-area: 1 / 1;
  margin: 0;
  color: #f9fbfa;
  font-size: 36.300px;
  line-height: 43px;
  white-space: pre;
`;

const Meta = styled.div<{ $out?: boolean; $stacked?: boolean }>`
  grid-area: ${(p) => (p.$stacked ? 2 : 1)} / 1;
  display: flex;
  align-items: center;
  place-self: end;
  gap: 9px;
  height: 33px;
  margin-bottom: ${(p) => (p.$stacked ? 0 : p.$out ? -10 : -12)}px;
  color: ${(p) => (p.$out ? "#8b9f98" : "#8c9295")};
  font-size: 28px;
  line-height: 33px;
  letter-spacing: 0.200px;
  white-space: nowrap;
`;

const TicksIcon = styled.svg`
  width: 42px;
  height: 26px;
  margin-top: -5px;
  fill: none;
  stroke: #53b9e6;
  stroke-width: 3.6px;
  stroke-linecap: round;
  stroke-linejoin: round;
`;

const JumpButton = styled.button`
  position: absolute;
  right: 31px;
  bottom: 41px;
  display: flex;
  align-items: center;
  justify-content: center;
  width: 82px;
  height: 82px;
  padding: 5px 0 0;
  border: 0;
  border-radius: 50%;
  background: #263139;
  box-shadow: 0 3px 9px rgba(0, 0, 0, 0.45);
`;

interface Message {
  text: string;
  time: string;
  w: number;
  gap: number;
  out?: boolean;
  tail?: boolean;
  stacked?: boolean;
  quote?: string;
}

const messages: Message[] = [
  { text: "aprom?", time: "10:45 pm", w: 358, gap: 0, out: true, quote: "Vendam nu ila" },
  { text: "Adhn", time: "10:45 pm", w: 396, gap: 26, tail: true, quote: "vendam nu irrunthina...\nhope kudikathaa" },
  { text: "Ipo vendam", time: "10:45 pm", w: 386, gap: 6, quote: "aprom?" },
  { text: "ok ma", time: "10:45 pm", w: 336, gap: 26, out: true, tail: true, quote: "Ipo vendam" },
  { text: "onaku eppavu", time: "10:46 pm", w: 460, gap: 5, out: true },
  { text: "Mm", time: "10:46 pm", w: 261, gap: 24, tail: true },
  { text: "Ana enaku una miss panavum vendam", time: "10:46 pm", w: 819, gap: 4 },
  { text: "Sari wait panuvom", time: "10:46 pm", w: 496, gap: 4 },
  { text: "en na ni pesa pesa than athigama aguthu", time: "10:46 pm", w: 717, gap: 25, out: true, tail: true, stacked: true, quote: "Adhn" },
  { text: "Purithu", time: "10:46 pm", w: 314, gap: 25, tail: true },
  {
    text: "enakum athan na onnum summa vo time pass ko\npannala na ennaiya porutha vara unmaiya pandren\nunnaiya mattum than pandren\nenaku oniya vda thonala\nvda mudiyathu",
    time: "10:47 pm", w: 890, gap: 25, out: true, tail: true, quote: "Ana enaku una miss panavum vendam",
  },
  { text: "", time: "", w: 890, gap: 6, out: true, quote: "Sari wait panuvom" },
];

function MessageBubble({ m }: { m: Message }) {
  return (
    <Bubble $out={m.out} $w={m.w} $gap={m.gap} $tail={m.tail}>
      {m.tail && (
        <TailShape $out={m.out} viewBox="0 0 20 29">
          <path d="M0 0H14.5Q20 1.5 19.5 6.5Q19 9 17 11L2 28V29H0Z" />
        </TailShape>
      )}
      {m.quote && (
        <Quote $out={m.out} $tall={m.quote.includes("\n")}>
          <QuoteName $out={m.out}>
            {m.out ? <>Moon <MoonGlyph>🌕</MoonGlyph>💖</> : "You"}
          </QuoteName>
          <QuoteText $out={m.out}>{m.quote}</QuoteText>
        </Quote>
      )}
      <Body $out={m.out} $quoted={!!m.quote} $stacked={m.stacked}>
        <MessageText>{m.text || " "}</MessageText>
        {m.time && (
          <Meta $out={m.out} $stacked={m.stacked}>
            <span>{m.time}</span>
            {m.out && (
              <TicksIcon viewBox="0 0 42 26">
                <path d="M2 16L9.5 24L28 2M19.5 20.5L23 24L40.5 2" />
              </TicksIcon>
            )}
          </Meta>
        )}
      </Body>
    </Bubble>
  );
}

export default function App() {
  return (
    <>
      <GlobalStyle />
      <Screen>
        <StatusBar>
          <StatusText $size={32.5} $spacing={-0.7}>3:43:18</StatusText>
          <Badge>1</Badge>
          <StatusIcons viewBox="811 46 133 30">
            <g fill="none" stroke="#cfd1d2" strokeWidth="3.8">
              <path d="M814 56Q830 41.500 846 56M818.500 62Q830 51 841.500 62M823 67.500Q830 61 837 67.500" />
            </g>
            <circle cx="830" cy="72" r="2.900" />
            <path d="M845.500 63L850 68.500H841ZM845.500 75.500L850 70H841Z" />
            <path d="M816.500 63.500L812 71.500H819M817 67V75" fill="none" stroke="#cfd1d2" strokeWidth="1.500" />
            {[859, 907].map((x) => (
              <g key={x}>
                <rect x={x} y="64.500" width="5.600" height="10.500" rx="1" />
                <rect x={x + 10} y="61" width="5.600" height="14" rx="1" />
                <rect x={x + 20.5} y="55.500" width="5.600" height="19.500" rx="1" />
                <rect x={x + 30.5} y="48.500" width="5.600" height="26.500" rx="1" />
              </g>
            ))}
          </StatusIcons>
          <StatusText $size={33.5} $spacing={-0.1}>98%</StatusText>
        </StatusBar>
        <SearchBar>
          <BarIcon $w={42} $h={42} viewBox="0 0 42 42" strokeWidth="5">
            <path d="M42 21.500H4M22.500 2.500L3.500 21.500L22.500 40.500" />
          </BarIcon>
          <Query>
            <QueryText>🥺</QueryText>
            <Caret />
          </Query>
          <BarActions>
            <BarIcon $w={31} $h={19} viewBox="0 0 31 19" strokeWidth="5" strokeLinecap="round">
              <path d="M3.500 15.500L15.500 4L27.500 15.500" />
            </BarIcon>
            <BarIcon $w={31} $h={19} viewBox="0 0 31 19" strokeWidth="5" strokeLinecap="round">
              <path d="M3.500 3.500L15.500 15L27.500 3.500" />
            </BarIcon>
          </BarActions>
        </SearchBar>
        <Rule />
        <Chat>
          <Wallpaper />
          <Thread>
            {messages.map((m, i) => <MessageBubble key={i} m={m} />)}
          </Thread>
          <DateChip>11 April 2025</DateChip>
          <JumpButton aria-label="Jump to latest">
            <BarIcon $w={32} $h={34} $color="#91999d" viewBox="0 0 32 34" strokeWidth="4.600" strokeLinecap="round">
              <path d="M4 4L16 15L28 4M4 19L16 30L28 19" />
            </BarIcon>
          </JumpButton>
        </Chat>
      </Screen>
    </>
  );
}
